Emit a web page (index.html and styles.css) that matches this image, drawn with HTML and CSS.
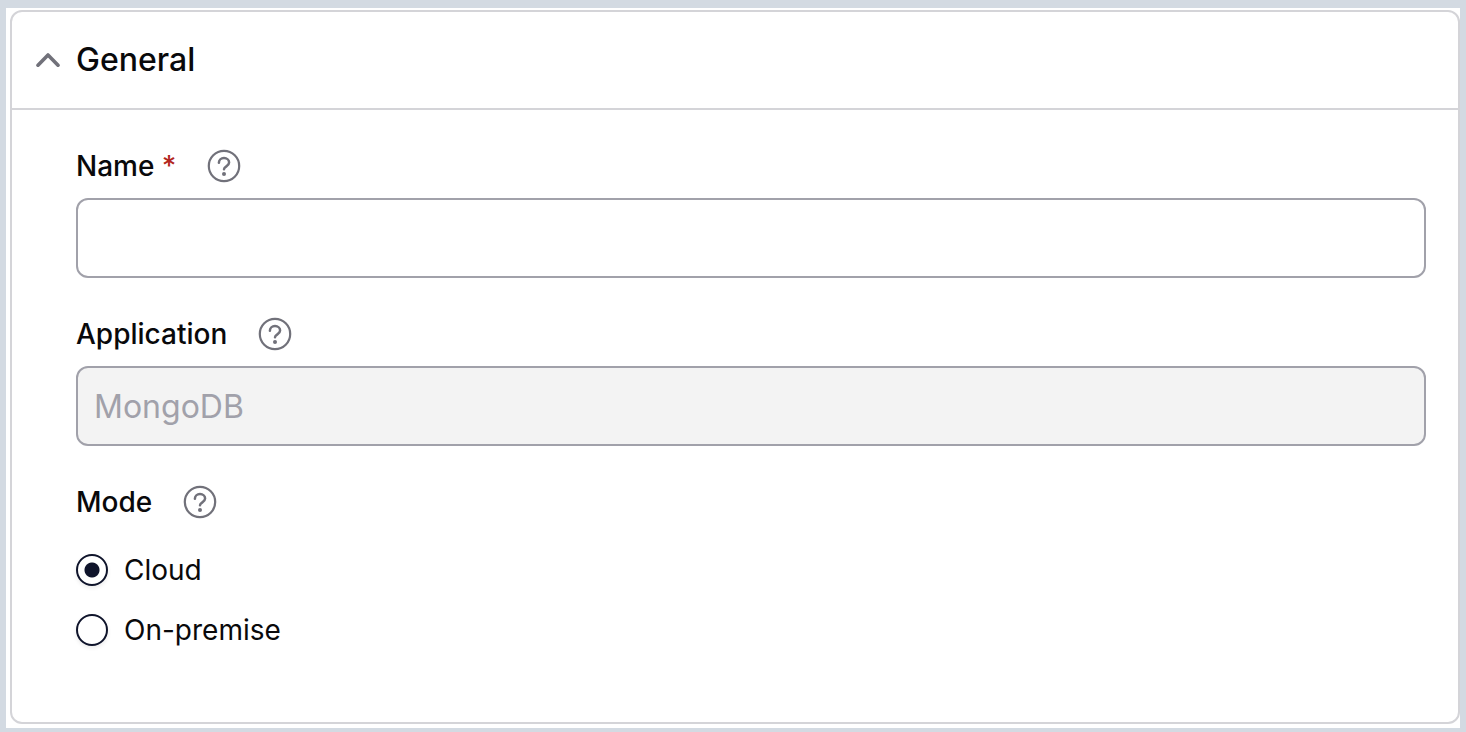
FILE: index.html
```html
<!DOCTYPE html>
<html lang="en">
<head>
    <meta charset="UTF-8">
    <meta name="viewport" content="width=device-width, initial-scale=1.0">
    <title>General</title>
    <link rel="stylesheet" href="styles.css">
</head>
<body>
    <svg class="sprite" aria-hidden="true">
        <symbol id="help" viewBox="0 0 36 36">
            <circle cx="18" cy="18" r="15.2" stroke-width="2.2"/>
            <path d="M12.9 14.8c0-2.900 2.200-4.700 5.100-4.700s5.100 1.800 5.100 4.500c0 3.900-5.100 3.500-5.100 6.700" stroke-width="2.500" stroke-linecap="round"/>
            <circle class="dot" cx="18" cy="26" r="2"/>
        </symbol>
    </svg>
    <div class="page">
        <form class="card">
            <div class="card-header">
                <button type="button" class="toggle" aria-expanded="true">
                    <svg class="chevron" viewBox="0 0 24 16">
                        <path d="M2 13.200L12 3l10 10.200"/>
                    </svg>
                    <span class="title">General</span>
                </button>
            </div>
            <div class="card-body">
                <div class="field">
                    <div class="label-row">
                        <label for="name">Name <span class="required">*</span></label>
                        <button type="button" class="help" aria-label="Help for name"><svg><use href="#help"/></svg></button>
                    </div>
                    <input type="text" id="name" class="text-input" autocomplete="off">
                </div>
                <div class="field">
                    <div class="label-row">
                        <label for="application">Application</label>
                        <button type="button" class="help" aria-label="Help for application"><svg><use href="#help"/></svg></button>
                    </div>
                    <input type="text" id="application" class="text-input" value="MongoDB" disabled>
                </div>
                <div class="field" role="radiogroup" aria-labelledby="modeLabel">
                    <div class="label-row">
                        <span id="modeLabel">Mode</span>
                        <button type="button" class="help" aria-label="Help for mode"><svg><use href="#help"/></svg></button>
                    </div>
                    <div class="options">
                        <label class="option" for="cloud">
                            <input type="radio" id="cloud" name="mode" value="cloud" checked>
                            Cloud
                        </label>
                        <label class="option" for="onPremise">
                            <input type="radio" id="onPremise" name="mode" value="on-premise">
                            On-premise
                        </label>
                    </div>
                </div>
            </div>
        </form>
    </div>
</body>
</html>
```

FILE: styles.css
```css
* {
    box-sizing: border-box;
}
body {
    margin: 0;
    padding: 8px 6px 4px;
    min-height: 100vh;
    display: flex;
    background-color: #d3dae2;
    font-family: Inter, sans-serif;
    font-size: 28px;
    line-height: 40px;
    color: #09090b;
}
.sprite {
    position: absolute;
    width: 0;
    height: 0;
}
.page {
    flex: 1;
    display: flex;
    padding: 2px 0 4px 4px;
    background: white;
}
.card {
    flex: 1;
    border: 2px solid #d4d4d8;
    border-radius: 12px;
}
.card-header {
    padding: 28px 24px;
    border-bottom: 2px solid #d4d4d8;
}
button {
    padding: 0;
    border: none;
    background: none;
    color: #71717a;
    cursor: pointer;
}
button svg {
    display: block;
    fill: none;
    stroke: currentColor;
}
.toggle {
    display: flex;
    align-items: center;
    gap: 16px;
    font: inherit;
}
.chevron {
    width: 24px;
    height: 16px;
    stroke-width: 3.6;
    stroke-linecap: round;
    stroke-linejoin: round;
}
.title {
    font-size: 32px;
    font-weight: 500;
    color: #09090b;
}
.card-body {
    display: flex;
    flex-direction: column;
    gap: 36px;
    padding: 36px 32px 36px 64px;
}
.label-row {
    display: flex;
    align-items: center;
    gap: 30px;
    margin-bottom: 12px;
    font-weight: 500;
}
.required {
    color: #b3261e;
}
.help svg {
    width: 36px;
    height: 36px;
}
.dot {
    fill: currentColor;
    stroke: none;
}
.text-input {
    display: block;
    width: 100%;
    height: 80px;
    padding: 0 16px;
    border: 2px solid #a1a1aa;
    border-radius: 12px;
    background: white;
    font: inherit;
    font-size: 32px;
    color: #09090b;
}
.text-input:disabled {
    background: #f3f3f3;
    color: #a1a1aa;
}
.options {
    display: flex;
    flex-direction: column;
    align-items: flex-start;
    gap: 20px;
    padding-top: 16px;
}
.option {
    display: flex;
    align-items: center;
    gap: 16px;
}
.option input {
    appearance: none;
    width: 32px;
    height: 32px;
    margin: 0;
    border: 2px solid #0f142b;
    border-radius: 50%;
    background: white;
    box-shadow: 0 2px 4px rgba(0, 0, 0, 0.08);
}
.option input:checked {
    background: radial-gradient(circle, #0f142b 7px, white 8px);
}
```
